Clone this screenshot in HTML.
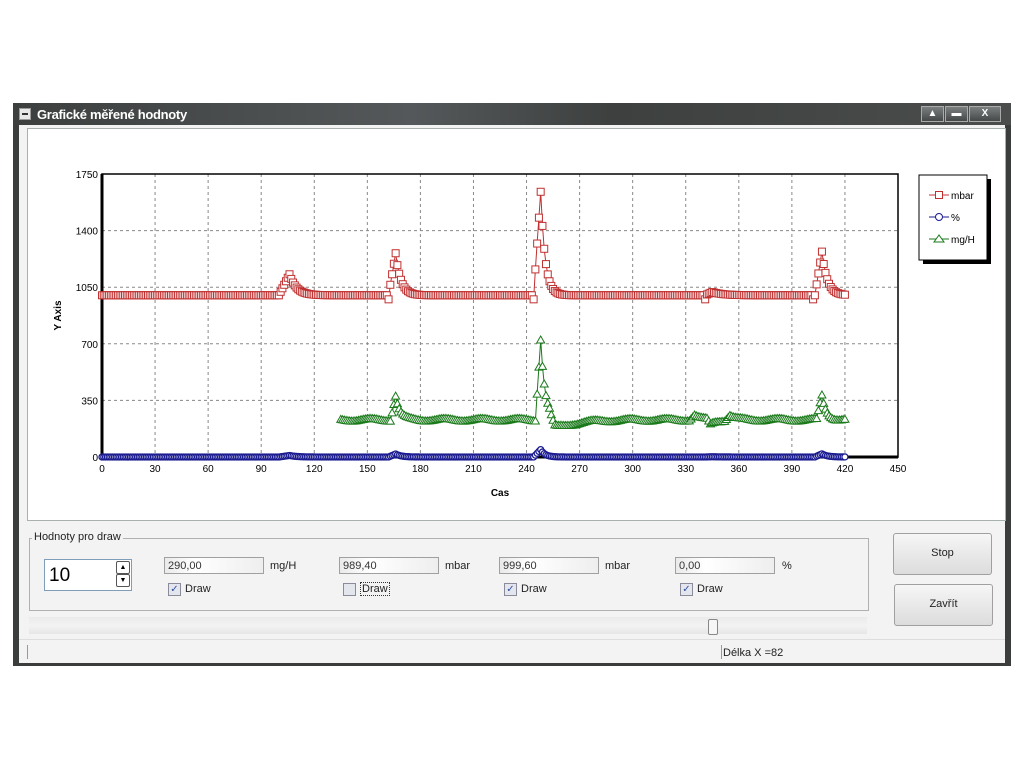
<!DOCTYPE html>
<html><head><meta charset="utf-8"><style>
body{margin:0;width:1024px;height:768px;background:#fff;font-family:"Liberation Sans",sans-serif;position:relative;overflow:hidden}
.win{position:absolute;left:13px;top:103px;width:998px;height:563px;background:#3a3d3c;}
.title{position:absolute;left:0;top:0;width:998px;height:22px;background:linear-gradient(90deg,#3c3f3e,#55585a 40%,#3d403f 60%,#4a4d4c);color:#fff;font-weight:bold;font-size:13px;}
.client{position:absolute;left:6px;top:22px;width:986px;height:537px;background:#f3f3f3;}
.chart{position:absolute;left:8px;top:3px;width:977px;height:391px;background:#fff;border:1px solid #a8b0b0;}
.sb{position:absolute;width:21px;height:14px;top:3px;background:linear-gradient(#7c7f80,#454849);border:1px solid #aaa;color:#fff;font-size:10px;text-align:center;line-height:14px;font-weight:bold}
.grp{position:absolute;left:10px;top:413px;width:838px;height:71px;border:1px solid #b0b0b0;}
.lab{position:absolute;font-size:11px;color:#222;background:#f3f3f3;padding:0 2px}
.tb{position:absolute;height:17px;border:1px solid #a0a0a0;background:linear-gradient(90deg,#eaeaea,#fff 30%,#eee);font-size:11px;line-height:17px;padding-left:3px;color:#333;box-sizing:border-box}
.u{position:absolute;font-size:11px;color:#222}
.cb{position:absolute;width:11px;height:11px;border:1px solid #8a8a9a;background:#e4e6ee;font-size:10px;line-height:11px;text-align:center;color:#3050a0}
.btn{position:absolute;width:97px;height:40px;border:1px solid #a0a0a0;border-radius:3px;background:linear-gradient(#f6f6f6,#dcdcdc);font-size:11px;text-align:center;line-height:38px;color:#222}
</style></head><body>
<div class="win">
<div class="title"><div style="position:absolute;left:6px;top:5px;width:10px;height:10px;background:#e8e8e8;border:1px solid #999"><div style="margin:4px 2px;height:2px;background:#333"></div></div><span style="position:absolute;left:24px;top:4px;letter-spacing:-0.3px">Grafické měřené hodnoty</span>
<div class="sb" style="left:908px">▲</div><div class="sb" style="left:932px">▬</div><div class="sb" style="left:956px;width:30px">X</div></div>
<div class="client">
<div class="chart"><svg id="s" width="977" height="391" style="position:absolute;left:0;top:0" font-family="Liberation Sans" font-size="10"></svg></div>
<div class="grp"><span class="lab" style="left:2px;top:-8px">Hodnoty pro draw</span>
<div style="position:absolute;left:14px;top:20px;width:88px;height:32px;border:1px solid #7f9db9;background:#fff;font-size:19px;line-height:32px;padding-left:4px;box-sizing:border-box">10</div>
<div style="position:absolute;left:86px;top:22px;width:12px;height:11px;border:1px solid #555;border-radius:2px;font-size:7px;text-align:center;line-height:11px">▲</div>
<div style="position:absolute;left:86px;top:35px;width:12px;height:11px;border:1px solid #555;border-radius:2px;font-size:7px;text-align:center;line-height:11px">▼</div>
<div class="tb" style="left:134px;top:18px;width:100px">290,00</div><span class="u" style="left:240px;top:21px">mg/H</span>
<div class="tb" style="left:309px;top:18px;width:100px">989,40</div><span class="u" style="left:415px;top:21px">mbar</span>
<div class="tb" style="left:469px;top:18px;width:100px">999,60</div><span class="u" style="left:575px;top:21px">mbar</span>
<div class="tb" style="left:645px;top:18px;width:100px">0,00</div><span class="u" style="left:752px;top:21px">%</span>
<div class="cb" style="left:138px;top:44px">✓</div><span class="u" style="left:155px;top:44px">Draw</span>
<div class="cb" style="left:313px;top:44px"></div><span class="u" style="left:330px;top:43px;border:1px dotted #333;padding:0 1px">Draw</span>
<div class="cb" style="left:474px;top:44px">✓</div><span class="u" style="left:491px;top:44px">Draw</span>
<div class="cb" style="left:650px;top:44px">✓</div><span class="u" style="left:667px;top:44px">Draw</span>
</div>
<div style="position:absolute;left:10px;top:492px;width:838px;height:17px;background:linear-gradient(#eaeaea,#f3f3f3 50%,#e6e6e6)"></div>
<div style="position:absolute;left:689px;top:494px;width:8px;height:14px;border:1px solid #888;border-radius:2px;background:#f6f6f6"></div>
<div class="btn" style="left:874px;top:408px">Stop</div>
<div class="btn" style="left:875px;top:459px">Zavřít</div>
<div style="position:absolute;left:0;top:514px;width:986px;height:23px;background:#f3f3f3;border-top:1px solid #ddd"></div>
<div style="position:absolute;left:8px;top:520px;width:1px;height:14px;background:#999"></div>
<div style="position:absolute;left:702px;top:520px;width:1px;height:14px;background:#999"></div>
<span class="u" style="left:704px;top:522px">Délka X =82</span>
</div></div>
<script>
var s=document.getElementById('s'),h='';
var ox=102-28,oy=457-129;
function X(v){return ox+v*796/450}function Y(v){return oy-v*283/1750}
for(var i=1;i<15;i++){var x=X(i*30);h+='<line x1="'+x+'" y1="'+Y(1750)+'" x2="'+x+'" y2="'+Y(0)+'" stroke="#888" stroke-dasharray="3,3"/>';}
for(var j=1;j<5;j++){var y=Y(j*350);h+='<line x1="'+X(0)+'" y1="'+y+'" x2="'+X(450)+'" y2="'+y+'" stroke="#888" stroke-dasharray="3,3"/>';}
h+='<rect x="'+X(0)+'" y="'+Y(1750)+'" width="'+(X(450)-X(0))+'" height="'+(Y(0)-Y(1750))+'" fill="none" stroke="#000" stroke-width="1.5"/>';
h+='<line x1="'+X(0)+'" y1="'+Y(1750)+'" x2="'+X(0)+'" y2="'+Y(0)+'" stroke="#000" stroke-width="3"/><line x1="'+X(0)+'" y1="'+Y(0)+'" x2="'+X(450)+'" y2="'+Y(0)+'" stroke="#000" stroke-width="3"/>';
for(var j=0;j<=5;j++)h+='<text x="'+(X(0)-4)+'" y="'+(Y(j*350)+4)+'" text-anchor="end">'+(j*350)+'</text>';
for(var i=0;i<=15;i++)h+='<text x="'+X(i*30)+'" y="'+(Y(0)+15)+'" text-anchor="middle">'+(i*30)+'</text>';
h+='<text x="'+(X(225))+'" y="'+(Y(0)+39)+'" text-anchor="middle" font-weight="bold">Cas</text>';
h+='<text transform="translate(33,'+(Y(875))+') rotate(-90)" text-anchor="middle" font-weight="bold">Y Axis</text>';
function pk(t,c,a,r,d){var dt=t-c;if(dt<-r)return 0;if(dt<0)return a*(1+dt/r);return a*Math.exp(-dt/d);}
var R=[],G=[],B=[];
var P=[[106,130,6,4],[166,260,4,3],[248,640,4,2.5],[345,20,4,6],[407,270,4,3]];
for(var t=0;t<=420;t++){var r=1000,b=0,g=230+8*Math.sin(t*0.3);P.forEach(function(p){r+=pk(t,p[0],p[1],p[2],p[3]);b+=pk(t,p[0],p[1]/14,p[2],p[3]);});
if(t==162||t==244||t==402||t==341)r-=25;
g+=pk(t,166,150,3,2.5)+pk(t,248,500,3,2.5)+pk(t,407,150,3,2.5)-pk(t,256,60,3,12)+pk(t,335,30,3,3)-pk(t,344,30,2,3)+pk(t,355,30,3,3);
R.push([t,r]);B.push([t,b]);if(t>=135)G.push([t,g]);}
function line(a,c){return '<polyline fill="none" stroke="'+c+'" points="'+a.map(function(p){return X(p[0]).toFixed(1)+','+Y(p[1]).toFixed(1)}).join(' ')+'"/>';}
h+=line(G,'#1a7a1a');G.forEach(function(p){var x=X(p[0]),y=Y(p[1]);h+='<polygon points="'+(x-4)+','+(y+3)+' '+(x+4)+','+(y+3)+' '+x+','+(y-4)+'" fill="#fff" stroke="#1a7a1a"/>';});
h+=line(R,'#c03030');R.forEach(function(p){var x=X(p[0]),y=Y(p[1]);h+='<rect x="'+(x-3.5)+'" y="'+(y-3.5)+'" width="7" height="7" fill="#fff" stroke="#c03030"/>';});
h+=line(B,'#1a1a90');B.forEach(function(p){var x=X(p[0]),y=Y(p[1]);h+='<circle cx="'+x+'" cy="'+y+'" r="3" fill="#fff" stroke="#1a1a90" stroke-width="1.3"/>';});
h+='<rect x="895" y="50" width="68" height="85" fill="#000"/><rect x="891" y="46" width="68" height="85" fill="#fff" stroke="#000"/>';
h+='<line x1="901" y1="66" x2="921" y2="66" stroke="#c03030"/><rect x="907.5" y="62.5" width="7" height="7" fill="#fff" stroke="#c03030"/><text x="923" y="70">mbar</text>';
h+='<line x1="901" y1="88" x2="921" y2="88" stroke="#1a1a90"/><circle cx="911" cy="88" r="3.5" fill="#fff" stroke="#1a1a90"/><text x="923" y="92">%</text>';
h+='<line x1="901" y1="110" x2="921" y2="110" stroke="#1a7a1a"/><polygon points="906,113 916,113 911,106" fill="#fff" stroke="#1a7a1a"/><text x="923" y="114">mg/H</text>';
s.innerHTML=h;
</script>
</body></html>
